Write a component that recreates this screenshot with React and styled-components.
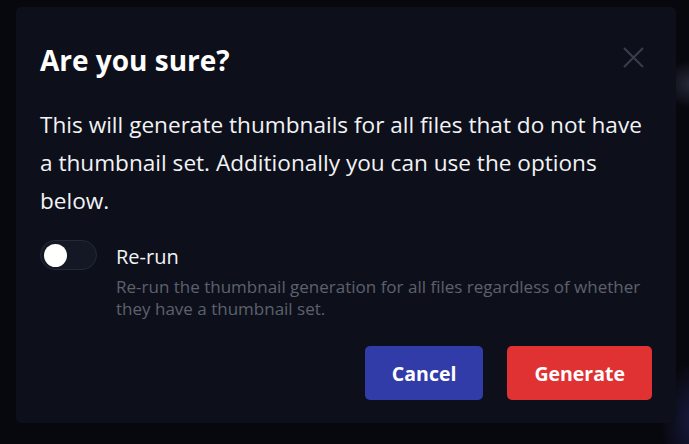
import React, { useState } from 'react';
import styled, { createGlobalStyle } from 'styled-components';

const GlobalStyle = createGlobalStyle`
  html, body {
    margin: 0;
    padding: 0;
    background: #07080d;
  }
  body {
    font-family: "Open Sans", "Noto Sans", sans-serif;
    color: #ffffff;
  }
`;

const Backdrop = styled.div`
  width: 689px;
  height: 444px;
  box-sizing: border-box;
  padding: 7px 13px 21px 16px;
  background:
    radial-gradient(ellipse 40px 60px at 700px 420px, rgba(40, 44, 110, 0.6), transparent),
    radial-gradient(ellipse 30px 24px at 692px 84px, rgba(60, 64, 90, 0.6), transparent),
    #07080d;
  overflow: hidden;
`;

const Modal = styled.div`
  background: #0d101b;
  border-radius: 5px;
  height: 100%;
  box-sizing: border-box;
  padding: 24px 24px 23px 24px;
  display: flex;
  flex-direction: column;
`;

const Header = styled.div`
  display: flex;
  align-items: flex-start;
  justify-content: space-between;
  margin-top: 8px;
`;

const Title = styled.h2`
  margin: 0;
  font-size: 28px;
  font-weight: 700;
  line-height: 42px;
`;

const CloseButton = styled.button`
  background: none;
  border: none;
  padding: 0;
  width: 26px;
  height: 26px;
  margin: 5px 6px 0 0;
  color: #3a3e4c;
  display: flex;
  align-items: center;
  justify-content: center;
  cursor: pointer;
`;

const Body = styled.p`
  margin: 25px 0 0 0;
  font-size: 22.6px;
  line-height: 38px;
  color: #f2f3f5;
`;

const OptionRow = styled.div`
  display: flex;
  gap: 19px;
  margin-top: 20px;
`;

const Track = styled.div`
  width: 57px;
  height: 30px;
  flex: none;
  box-sizing: border-box;
  border-radius: 15px;
  border: 1px solid #262a38;
  background: ${p => (p.$on ? '#3b45b0' : '#141724')};
  display: flex;
  align-items: center;
  padding: 0 3px;
  justify-content: ${p => (p.$on ? 'flex-end' : 'flex-start')};
  cursor: pointer;
`;

const Thumb = styled.div`
  width: 23px;
  height: 23px;
  border-radius: 50%;
  background: #ffffff;
`;

const OptionText = styled.div`
  display: flex;
  flex-direction: column;
  padding-top: 2px;
`;

const OptionLabel = styled.div`
  font-size: 20px;
  line-height: 30px;
  color: #f2f3f5;
`;

const OptionHint = styled.div`
  margin-top: 4px;
  font-size: 17px;
  line-height: 22px;
  color: #5d616d;
`;

const Footer = styled.div`
  margin-top: auto;
  display: flex;
  justify-content: flex-end;
  gap: 24px;
`;

const Button = styled.button`
  height: 54px;
  padding: 0 27px;
  border: none;
  border-radius: 5px;
  background: ${p => p.$bg};
  color: #ffffff;
  font-family: inherit;
  font-size: 19.5px;
  font-weight: 700;
  cursor: pointer;
`;

export default function App() {
  const [rerun, setRerun] = useState(false);
  return (
    <>
      <GlobalStyle />
      <Backdrop>
        <Modal>
          <Header>
            <Title>Are you sure?</Title>
            <CloseButton aria-label="Close">
              <svg width="21" height="21" viewBox="0 0 21 21" fill="none" stroke="currentColor" strokeWidth="2">
                <path d="M1 1L20 20M20 1L1 20" />
              </svg>
            </CloseButton>
          </Header>
          <Body>
            This will generate thumbnails for all files that do not have a thumbnail set. Additionally you can use the options below.
          </Body>
          <OptionRow>
            <Track $on={rerun} onClick={() => setRerun(!rerun)}>
              <Thumb />
            </Track>
            <OptionText>
              <OptionLabel>Re-run</OptionLabel>
              <OptionHint>
                Re-run the thumbnail generation for all files regardless of whether they have a thumbnail set.
              </OptionHint>
            </OptionText>
          </OptionRow>
          <Footer>
            <Button $bg="#323ca9">Cancel</Button>
            <Button $bg="#e03232">Generate</Button>
          </Footer>
        </Modal>
      </Backdrop>
    </>
  );
}
